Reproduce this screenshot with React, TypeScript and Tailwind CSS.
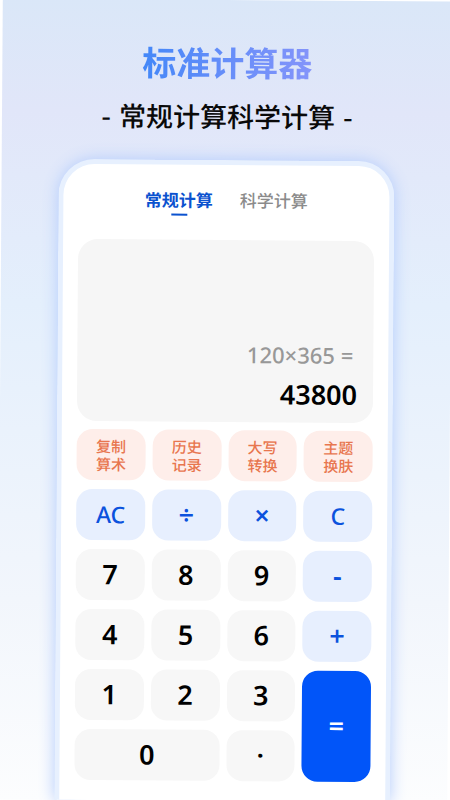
import { useState } from 'react';

const tabs = ['常规计算', '科学计算'];

const tools = ['复制算术', '历史记录', '大写转换', '主题换肤'];

const keyBase = 'flex items-center justify-center rounded-2xl';

const kinds = {
    number: 'bg-[#f7f7f7] text-[27px] font-semibold text-black hover:bg-gray-200',
    letter: 'bg-[#e7effe] text-[23px] font-medium text-[#0b52dd] hover:bg-blue-200',
    operator: 'bg-[#e7effe] text-[27px] font-semibold text-[#0b52dd] hover:bg-blue-200',
    equals: 'bg-[#0155f9] text-[27px] font-semibold text-white hover:bg-blue-700',
};

const keys: { label: string; kind: keyof typeof kinds; span?: string }[] = [
    { label: 'AC', kind: 'letter' },
    { label: '÷', kind: 'operator' },
    { label: '×', kind: 'operator' },
    { label: 'C', kind: 'letter' },
    { label: '7', kind: 'number' },
    { label: '8', kind: 'number' },
    { label: '9', kind: 'number' },
    { label: '-', kind: 'operator' },
    { label: '4', kind: 'number' },
    { label: '5', kind: 'number' },
    { label: '6', kind: 'number' },
    { label: '+', kind: 'operator' },
    { label: '1', kind: 'number' },
    { label: '2', kind: 'number' },
    { label: '3', kind: 'number' },
    { label: '=', kind: 'equals', span: 'row-span-2' },
    { label: '0', kind: 'number', span: 'col-span-2' },
    { label: '·', kind: 'number' },
];

function Tabs() {
    const [active, setActive] = useState(tabs[0]);

    return (
        <nav className="flex justify-center gap-[27px]">
            {tabs.map((tab) => (
                <button
                    key={tab}
                    onClick={() => setActive(tab)}
                    className={`flex flex-col items-center gap-0.5 text-[17px] leading-6 ${
                        tab === active ? 'font-bold text-[#0b52cf]' : 'font-medium text-[#8b8b8b]'
                    }`}
                >
                    {tab}
                    {tab === active && <span className="h-0.5 w-4 bg-[#0b52cf]" />}
                </button>
            ))}
        </nav>
    );
}

function Display() {
    return (
        <div className="mt-6 flex h-[182px] flex-col items-end justify-end rounded-[20px] bg-[#f6f6f6] px-4 pb-2 font-['Noto_Sans',sans-serif]">
            <p className="pr-1 text-[22px] leading-8 font-medium text-[#989898]">120×365 =</p>
            <output className="mt-1 text-[27px] leading-10 font-semibold text-black">43800</output>
        </div>
    );
}

function Keypad() {
    return (
        <div className="mt-2 grid auto-rows-[51px] grid-cols-4 gap-x-[7px] gap-y-[9px] font-['Noto_Sans','Noto_Sans_CJK_SC',sans-serif]">
            {tools.map((tool) => (
                <button
                    key={tool}
                    className="flex items-center justify-center rounded-2xl bg-[#feeeea] text-[15px] leading-[18px] font-medium text-[#e8764f] hover:bg-orange-100"
                >
                    <span className="w-[30px]">{tool}</span>
                </button>
            ))}
            {keys.map(({ label, kind, span }) => (
                <button key={label} className={`${keyBase} ${kinds[kind]} ${span ?? ''}`}>
                    {label}
                </button>
            ))}
        </div>
    );
}

export default function App() {
    return (
        <div className="min-h-screen overflow-hidden bg-white">
            <main className="flex min-h-screen rotate-[0.4deg] flex-col bg-[linear-gradient(#dae7f8,#e1e6f9_14%,#e4effc_38%,#f2f6fc_75%,#fcfdfe)] font-['Noto_Sans_CJK_SC',sans-serif]">
                <header className="pt-[38px] text-center">
                    <h1 className="mx-auto w-fit bg-linear-to-r from-[#4287f8] to-[#8494fa] bg-clip-text text-[34px] leading-12 font-bold text-transparent">
                        标准计算器
                    </h1>
                    <p className="mt-3 flex justify-center gap-2 text-[27px] leading-9 font-medium text-[#0a0a0a]">
                        <span>-</span>
                        <span>常规计算科学计算</span>
                        <span>-</span>
                    </p>
                </header>

                <section className="mx-[57px] mt-[26px] flex-1 rounded-t-[36px] border-x-5 border-t-5 border-[#e7f0fe] bg-white px-[15px] pt-[23px] pb-5 shadow-[0_0_16px_0_#b4ccfc]">
                    <Tabs />
                    <Display />
                    <Keypad />
                </section>
            </main>
        </div>
    );
}
